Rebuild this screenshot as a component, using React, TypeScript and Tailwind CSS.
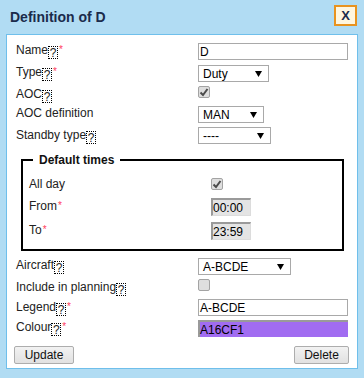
import type { ReactNode } from "react"

function Help() {
  return (
    <span className="mt-[3px] box-border inline-flex h-[13px] w-[10px] min-w-[10px] shrink-0 items-center justify-center border border-dotted border-black text-[12px] leading-none">
      ?
    </span>
  )
}

function Req() {
  return <span className="ml-[1px] mt-[2px] shrink-0 text-[10px] leading-none text-[#ff4060]">*</span>
}

function Arrow() {
  return (
    <svg width="7" height="6" viewBox="0 0 7 6" className="shrink-0">
      <polygon points="0,0 7,0 3.5,6" fill="#000" />
    </svg>
  )
}

function Select({ value, width }: { value: string; width: string }) {
  return (
    <div
      className={`flex h-[17px] items-center justify-between border border-[#a9a9a9] bg-white pl-[4px] pr-[6px] leading-none text-black ${width}`}
    >
      <span>{value}</span>
      <Arrow />
    </div>
  )
}

function Check({ checked }: { checked?: boolean }) {
  return (
    <span className="flex h-[12px] w-[12px] items-center justify-center rounded-[2px] border border-[#a3a3a3] bg-[#dedede]">
      {checked && (
        <svg width="10" height="10" viewBox="0 0 10 10">
          <path d="M1.5 5.5 L4 8 L8.5 2" fill="none" stroke="#4b4b4b" strokeWidth="2" />
        </svg>
      )}
    </span>
  )
}

function TextBox({ value }: { value: string }) {
  return (
    <div className="flex h-[17px] w-[150px] items-center border border-[#a9a9a9] bg-white pl-[1px] leading-none text-black">
      {value}
    </div>
  )
}

function TimeBox({ value }: { value: string }) {
  return (
    <div className="flex h-[18px] w-[40px] items-center border-t-2 border-l-2 border-b border-r border-t-[#9a9a9a] border-l-[#9a9a9a] border-b-[#dcdcdc] border-r-[#dcdcdc] bg-[#e4e4e4] leading-none text-black">
      {value}
    </div>
  )
}

function Row({
  label,
  children,
  h,
  lm = "mt-0",
}: {
  label: ReactNode
  children: ReactNode
  h: string
  lm?: string
}) {
  return (
    <div className={`flex items-start ${h}`}>
      <div className={`flex w-[182px] shrink-0 items-start leading-[14px] ${lm}`}>{label}</div>
      <div>{children}</div>
    </div>
  )
}

function Button({ children, width }: { children: ReactNode; width: string }) {
  return (
    <button
      className={`h-[18px] rounded-[2px] border border-[#adadad] bg-gradient-to-b from-[#f2f2f2] to-[#e1e1e1] text-[12px] leading-none text-[#111] ${width}`}
    >
      {children}
    </button>
  )
}

export default function App() {
  return (
    <div className="h-[378px] w-[364px] bg-[#b1dcf3] font-['Liberation_Sans',Arial,sans-serif] text-[12px] text-[#222]">
      <div className="flex h-[34px] items-start justify-between pl-[10px] pr-[7px]">
        <h1 className="mt-[9px] text-[14px] font-bold leading-[16px] text-[#1b2b4b]">Definition of D</h1>
        <button className="mt-[5px] flex h-[21px] w-[23px] items-center justify-center border-2 border-[#e8931f] bg-[#fff6df] text-[13px] font-bold leading-none text-[#1b2b4b]">
          X
        </button>
      </div>

      <div className="mx-[6px] h-[335px] border border-[#6fbfeb] bg-white pl-[9px] pt-[8px]">
        <Row h="h-[22px]" label={<>Name<Help /><Req /></>}>
          <TextBox value="D" />
        </Row>
        <Row h="h-[21px]" label={<>Type<Help /><Req /></>}>
          <Select value="Duty" width="w-[71px]" />
        </Row>
        <Row h="h-[20px]" lm="mt-[1px]" label={<>AOC<Help /></>}>
          <Check checked />
        </Row>
        <Row h="h-[21px]" label="AOC definition">
          <Select value="MAN" width="w-[66px]" />
        </Row>
        <Row h="h-[26px]" lm="mt-[1px]" label={<>Standby type<Help /></>}>
          <Select value="----" width="w-[73px]" />
        </Row>

        <fieldset className="ml-[5px] w-[323px] border-2 border-solid border-black pl-[6px]">
          <legend className="ml-[4px] px-[6px] text-[12px] font-bold leading-[14px] text-[#111]">
            Default times
          </legend>
          <div className="pt-[10px]">
            <Row h="h-[21px]" label="All day">
              <div className="pt-[1px]">
                <Check checked />
              </div>
            </Row>
            <Row h="h-[24px]" lm="mt-[1px]" label={<>From<Req /></>}>
              <TimeBox value="00:00" />
            </Row>
            <Row h="h-[27px]" lm="mt-[1px]" label={<>To<Req /></>}>
              <TimeBox value="23:59" />
            </Row>
          </div>
        </fieldset>

        <div className="mt-[7px]">
          <Row h="h-[21px]" label={<>Aircraft<Help /></>}>
            <Select value="A-BCDE" width="w-[93px]" />
          </Row>
          <Row h="h-[20px]" lm="mt-[1px]" label={<>Include in planning<Help /></>}>
            <Check />
          </Row>
          <Row h="h-[21px]" lm="mt-[1px]" label={<>Legend<Help /><Req /></>}>
            <TextBox value="A-BCDE" />
          </Row>
          <Row h="h-[26px]" label={<>Colour<Help /><Req /></>}>
            <div className="flex h-[17px] w-[150px] items-center border-t-2 border-l-2 border-t-[#9a9a9a] border-l-[#9a9a9a] bg-[#a16cf1] leading-none text-black">
              A16CF1
            </div>
          </Row>
        </div>

        <div className="-ml-[2px] flex justify-between pr-[8px]">
          <Button width="w-[60px]">Update</Button>
          <Button width="w-[55px]">Delete</Button>
        </div>
      </div>
    </div>
  )
}
